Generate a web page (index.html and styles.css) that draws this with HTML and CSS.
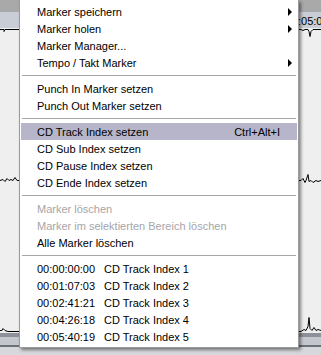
FILE: index.html
```html
<!DOCTYPE html>
<html>
  <head>
    <meta charset="UTF-8">
    <title>Marker Menu</title>
    <link rel="stylesheet" href="styles.css">
  </head>
  <body>
  <div class="editor">
    <div class="titlebar"></div>
    <div class="ruler"><span class="time">:05:0</span></div>
    <div class="track">
      <svg class="wave" width="321" height="305" viewBox="0 0 321 305">
        <polyline fill="none" stroke="#000" stroke-width="1"
          points="0,1.5 4,1.5 4,3.5 5,1.5 20,1.5 20,2.5 22,1.5 301,1.5 303,2.5 305,1.5 308,1.5 309,3.5 310,8.5 311,3.5 313,1.5 321,1.5"/>
        <polyline fill="none" stroke="#000" stroke-width="1"
          points="0,152.5 3,151.5 5,153.5 7,150.5 9,152.5 11,151.5 13,152.5 15,149.5 17,152.5 19,152.5 301,152.5 303,150.5 305,154.5 306,152.5 308,146.5 309,153.5 311,152.5 313,154.5 316,152.5 318,153.5 321,152.5"/>
        <polyline fill="none" stroke="#000" stroke-width="1"
          points="0,302.5 2,302.5 3,300.5 5,302.5 8,303.5 19,303.5 301,303.5 304,301.5 306,302.5 308,298.5 309,289.5 310,300.5 312,302.5 314,299.5 316,302.5 318,301.5 321,302.5"/>
      </svg>
    </div>
    <div class="scroll-top"></div>
    <div class="scroll-mid"></div>
    <div class="scroll-edge"></div>
    <div class="scroll-bottom"></div>
  </div>

  <div class="menu">
    <div class="item">Marker speichern<span class="arrow"></span></div>
    <div class="item">Marker holen<span class="arrow"></span></div>
    <div class="item">Marker Manager...</div>
    <div class="item">Tempo / Takt Marker<span class="arrow"></span></div>
    <div class="sep"></div>
    <div class="item">Punch In Marker setzen</div>
    <div class="item">Punch Out Marker setzen</div>
    <div class="sep"></div>
    <div class="item selected">CD Track Index setzen<span class="key">Ctrl+Alt+I</span></div>
    <div class="item">CD Sub Index setzen</div>
    <div class="item">CD Pause Index setzen</div>
    <div class="item">CD Ende Index setzen</div>
    <div class="sep"></div>
    <div class="item disabled">Marker löschen</div>
    <div class="item disabled">Marker im selektierten Bereich löschen</div>
    <div class="item">Alle Marker löschen</div>
    <div class="sep"></div>
    <div class="item"><span class="tc">00:00:00:00</span>CD Track Index 1</div>
    <div class="item"><span class="tc">00:01:07:03</span>CD Track Index 2</div>
    <div class="item"><span class="tc">00:02:41:21</span>CD Track Index 3</div>
    <div class="item"><span class="tc">00:04:26:18</span>CD Track Index 4</div>
    <div class="item"><span class="tc">00:05:40:19</span>CD Track Index 5</div>
  </div>
  </body>
</html>
```

FILE: styles.css
```css
body {
  margin: 0;
  width: 321px;
  height: 355px;
  overflow: hidden;
  position: relative;
  font-family: "Liberation Sans", Arial, sans-serif;
  font-size: 11px;
  color: #000;
}

.editor {
  display: flex;
  flex-direction: column;
  height: 355px;
}

.titlebar {
  height: 12px;
  background: #a9a9a9;
}

.ruler {
  height: 16px;
  background: #c9cdd5;
  padding-left: 298px;
  white-space: nowrap;
  overflow: hidden;
  line-height: 18px;
}

.track {
  height: 305px;
  background: #efefef;
}

.wave {
  display: block;
}

.scroll-top    { height: 4px; background: #8d9199; }
.scroll-mid    { height: 8px; background: #c4c7cd; }
.scroll-edge   { height: 2px; background: #6b6f77; }
.scroll-bottom { flex: 1; background: #d6d8dc; }

/* context menu */
.menu {
  position: absolute;
  left: 19px;
  top: 0;
  width: 276px;
  padding: 3px 1px 2px 1px;
  background: #fff;
  border: 1px solid #9a9a9a;
  border-top: none;
  box-shadow: 2px 2px 3px rgba(0, 0, 0, 0.45);
}

.item {
  display: flex;
  align-items: center;
  height: 17px;
  padding-left: 16px;
  white-space: nowrap;
}

.selected {
  background: #b7b5c9;
}

.disabled {
  color: #a6a5a9;
}

.arrow {
  margin-left: auto;
  margin-right: 5px;
  width: 0;
  height: 0;
  border-left: 4px solid #000;
  border-top: 4px solid transparent;
  border-bottom: 4px solid transparent;
}

.key {
  margin-left: auto;
  margin-right: 17px;
}

.tc {
  width: 67px;
}

.sep {
  height: 0;
  margin: 4px 1px;
  border-top: 1px solid #a6a6a6;
}
```
